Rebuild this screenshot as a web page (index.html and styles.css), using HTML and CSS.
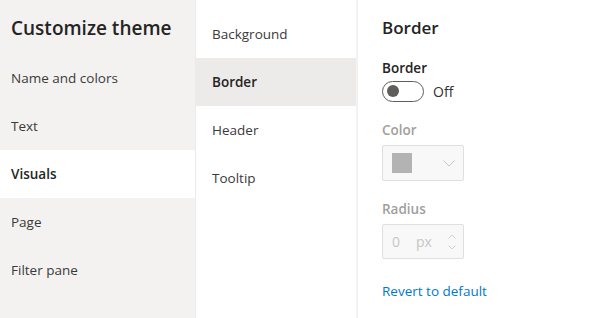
FILE: index.html
```html
<!DOCTYPE html>
<html lang="en">
<head>
    <meta charset="UTF-8">
    <title>Customize theme</title>
    <link rel="stylesheet" href="styles.css">
</head>
<body>
    <div class="panel">
        <div class="nav">
            <h1 class="title">Customize theme</h1>
            <a class="nav-item">Name and colors</a>
            <a class="nav-item">Text</a>
            <a class="nav-item active">Visuals</a>
            <a class="nav-item">Page</a>
            <a class="nav-item">Filter pane</a>
        </div>
        <div class="sub">
            <a class="sub-item">Background</a>
            <a class="sub-item active">Border</a>
            <a class="sub-item">Header</a>
            <a class="sub-item">Tooltip</a>
        </div>
        <div class="content">
            <h2 class="heading">Border</h2>
            <div class="label">Border</div>
            <div class="toggle-row">
                <span class="toggle"><span class="knob"></span></span>
                <span class="toggle-text">Off</span>
            </div>
            <div class="label disabled">Color</div>
            <div class="box color-box">
                <span class="swatch"></span>
                <svg class="chevron" width="12" height="7" viewBox="0 0 12 7">
                    <path d="M0.5 0.5 L6 6 L11.5 0.5" fill="none" stroke="#c8c6c4" stroke-width="1"/>
                </svg>
            </div>
            <div class="label disabled">Radius</div>
            <div class="box radius-box">
                <span class="num">0</span>
                <span class="unit">px</span>
                <span class="spin">
                    <svg width="8" height="5" viewBox="0 0 8 5"><path d="M0.5 4.5 L4 1 L7.5 4.5" fill="none" stroke="#d2d0ce"/></svg>
                    <svg width="8" height="5" viewBox="0 0 8 5"><path d="M0.5 0.5 L4 4 L7.5 0.5" fill="none" stroke="#d2d0ce"/></svg>
                </span>
            </div>
            <a class="revert">Revert to default</a>
        </div>
    </div>
</body>
</html>
```

FILE: styles.css
```css
body {
    margin: 0;
    font-family: "Open Sans", "Noto Sans", Arial, sans-serif;
    color: #323130;
    background: #fff;
}
.panel {
    display: flex;
    height: 318px;
    overflow: hidden;
}
.nav {
    width: 195px;
    background-color: #f3f2f1;
    display: flex;
    flex-direction: column;
    border-right: 1px solid #edebe9;
}
.title {
    margin: 0;
    height: 54px;
    padding: 0 11px;
    font-size: 19px;
    font-weight: 600;
    line-height: 56px;
    color: #252423;
}
.nav-item {
    height: 48px;
    line-height: 48px;
    padding: 0 11px;
    font-size: 13.5px;
    color: #3b3a39;
}
.nav-item.active {
    background-color: #fff;
    font-weight: 600;
    color: #252423;
}
.sub {
    width: 160px;
    padding-top: 10px;
    display: flex;
    flex-direction: column;
    border-right: 2px solid #f3f2f1;
}
.sub-item {
    height: 48px;
    line-height: 48px;
    padding: 0 16px;
    font-size: 13.5px;
    color: #3b3a39;
}
.sub-item.active {
    background-color: #edebe9;
    font-weight: 600;
    color: #252423;
}
.content {
    flex: 1;
    padding: 15px 0 0 24px;
    display: flex;
    flex-direction: column;
    align-items: flex-start;
}
.heading {
    margin: 0 0 17px;
    font-size: 17px;
    font-weight: 600;
    line-height: 26px;
    color: #252423;
}
.label {
    font-size: 13.5px;
    font-weight: 600;
    line-height: 20px;
    color: #252423;
}
.label.disabled {
    color: #a19f9d;
    margin-top: 18px;
    margin-bottom: 5px;
}
.toggle-row {
    display: flex;
    align-items: center;
    height: 22px;
    margin-top: 2px;
}
.toggle {
    width: 36px;
    height: 19px;
    border: 1px solid #605e5c;
    border-radius: 11px;
    display: flex;
    align-items: center;
    padding-left: 4px;
}
.knob {
    width: 12px;
    height: 12px;
    border-radius: 50%;
    background-color: #605e5c;
}
.toggle-text {
    margin-left: 9px;
    font-size: 14px;
    color: #323130;
}
.box {
    width: 80px;
    border: 1px solid #e1dfdd;
    border-radius: 2px;
    background-color: #f8f8f8;
    display: flex;
    align-items: center;
}
.color-box {
    height: 34px;
}
.swatch {
    width: 20px;
    height: 20px;
    margin-left: 9px;
    background-color: #b3b3b3;
}
.chevron {
    margin-left: 31px;
}
.radius-box {
    height: 33px;
    font-size: 14px;
    color: #c8c6c4;
}
.num {
    margin-left: 9px;
}
.unit {
    margin-left: 16px;
}
.spin {
    display: flex;
    flex-direction: column;
    gap: 6px;
    margin-left: 16px;
}
.spin svg {
    display: block;
}
.revert {
    margin-top: 23px;
    font-size: 13.5px;
    color: #0078d4;
}
```
